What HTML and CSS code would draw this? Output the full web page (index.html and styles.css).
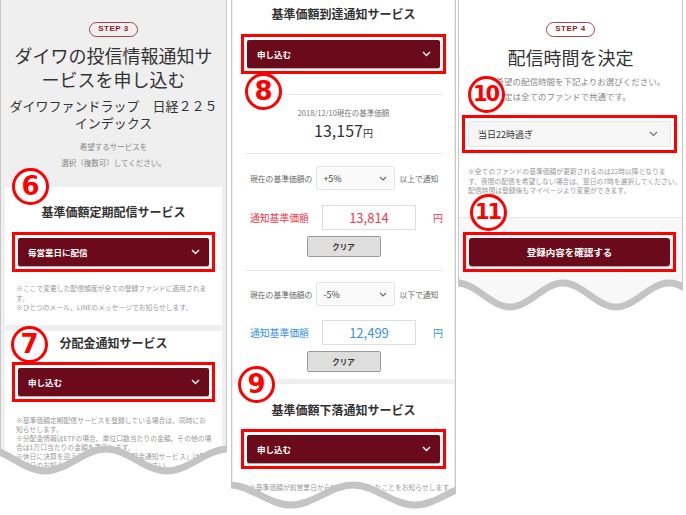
FILE: index.html
```html
<!DOCTYPE html>
<html lang="ja">
<head>
  <meta charset="UTF-8" />
  <meta name="viewport" content="width=device-width, initial-scale=1.0"/>
  <title>投信情報通知サービス 申込手順</title>
  <link rel="stylesheet" href="styles.css">
</head>
<body>

<div class="screens">

  <!-- STEP 3 : service select -->
  <section class="screen screen-step3">
    <div class="intro">
      <span class="step">STEP 3</span>
      <h1 class="page-title">ダイワの投信情報通知サ<br>ービスを申し込む</h1>
      <p class="fund-name">ダイワファンドラップ　日経２２５<br>インデックス</p>
      <p class="hint">希望するサービスを<br>選択（複数可）してください。</p>
    </div>

    <div class="card card-first">
      <h2 class="card-title">基準価額定期配信サービス</h2>
      <div class="highlight">
        <div class="dropdown">
          <span>毎営業日に配信</span>
          <svg class="chev" width="9" height="6" viewBox="0 0 9 6"><path d="M1 1l3.5 3.5L8 1" fill="none" stroke="#fff" stroke-width="1.4"/></svg>
        </div>
      </div>
      <p class="note">※ここで変更した配信頻度が全ての登録ファンドに適用されま<br>す。<br>※ひとつのメール、LINEのメッセージでお知らせします。</p>
    </div>

    <div class="card card-dist">
      <h2 class="card-title">分配金通知サービス</h2>
      <div class="highlight">
        <div class="dropdown">
          <span>申し込む</span>
          <svg class="chev" width="9" height="6" viewBox="0 0 9 6"><path d="M1 1l3.5 3.5L8 1" fill="none" stroke="#fff" stroke-width="1.4"/></svg>
        </div>
      </div>
      <p class="note note-tight">※基準価額定期配信サービスを登録している場合は、同時にお<br>知らせします。<br>※分配金情報はETFの場合、単位口数当たりの金額、その他の場<br>合は1万口当たりの金額を表示します。<br>※休日に決算を迎えるファンドの「分配金通知サービス」は翌<br>営業日のお知らせとなりますのでご了承ください。</p>
    </div>

    <span class="marker m6">6</span>
    <span class="marker m7">7</span>

    <svg class="wave" width="227" height="38" viewBox="0 0 227 38">
      <path d="M-15,9 C6.85,9 23.15,31 45,31 C67.2,31 83.8,9 106,9 C128.2,9 144.8,31 167,31 C189.2,31 205.8,9 228,9 L228,40 L-15,40 Z" fill="#fff"/>
      <path d="M-15,9 C6.85,9 23.15,31 45,31 C67.2,31 83.8,9 106,9 C128.2,9 144.8,31 167,31 C189.2,31 205.8,9 228,9" fill="none" stroke="#c4c4c4" stroke-width="7"/>
    </svg>
  </section>

  <!-- arrival / drop notice -->
  <section class="screen screen-arrival">
    <div class="card card-arrival">
      <h2 class="card-title">基準価額到達通知サービス</h2>
      <div class="highlight">
        <div class="dropdown">
          <span>申し込む</span>
          <svg class="chev" width="9" height="6" viewBox="0 0 9 6"><path d="M1 1l3.5 3.5L8 1" fill="none" stroke="#fff" stroke-width="1.4"/></svg>
        </div>
      </div>
      <div class="divider"></div>
      <div class="base-price">
        <p class="base-date">2018/12/10現在の基準価額</p>
        <p class="base-value">13,157<small>円</small></p>
      </div>
      <div class="divider divider-flush"></div>

      <div class="rate-row">
        <span>現在の基準価額の</span>
        <div class="mini-select">
          <span>+5%</span>
          <svg width="8" height="5" viewBox="0 0 8 5"><path d="M1 1l3 3 3-3" fill="none" stroke="#666" stroke-width="1.1"/></svg>
        </div>
        <span>以上で通知</span>
      </div>
      <div class="target-row up">
        <span class="target-label">通知基準価額</span>
        <div class="target-input">13,814</div>
        <span class="yen">円</span>
      </div>
      <button class="clear-btn">クリア</button>

      <div class="divider divider-after-btn"></div>

      <div class="rate-row">
        <span>現在の基準価額の</span>
        <div class="mini-select">
          <span>-5%</span>
          <svg width="8" height="5" viewBox="0 0 8 5"><path d="M1 1l3 3 3-3" fill="none" stroke="#666" stroke-width="1.1"/></svg>
        </div>
        <span>以下で通知</span>
      </div>
      <div class="target-row down">
        <span class="target-label">通知基準価額</span>
        <div class="target-input">12,499</div>
        <span class="yen">円</span>
      </div>
      <button class="clear-btn">クリア</button>
    </div>

    <div class="card card-drop">
      <h2 class="card-title">基準価額下落通知サービス</h2>
      <div class="highlight">
        <div class="dropdown">
          <span>申し込む</span>
          <svg class="chev" width="9" height="6" viewBox="0 0 9 6"><path d="M1 1l3.5 3.5L8 1" fill="none" stroke="#fff" stroke-width="1.4"/></svg>
        </div>
      </div>
      <p class="note note-wide">※基準価額が前営業日から5%以上急落したことをお知らせします。</p>
    </div>

    <span class="marker m8">8</span>
    <span class="marker m9">9</span>

    <svg class="wave" width="225" height="38" viewBox="0 0 225 38">
      <path d="M-2,13 C20.6,13 37.4,33 60,33 C82.6,33 99.4,13 122,13 C144.6,13 161.4,33 184,33 C206.6,33 223.4,13 246,13 L246,40 L-2,40 Z" fill="#fff"/>
      <path d="M-2,13 C20.6,13 37.4,33 60,33 C82.6,33 99.4,13 122,13 C144.6,13 161.4,33 184,33 C206.6,33 223.4,13 246,13" fill="none" stroke="#c4c4c4" stroke-width="7"/>
    </svg>
  </section>

  <!-- STEP 4 : delivery time -->
  <section class="screen screen-step4">
    <div class="intro">
      <span class="step">STEP 4</span>
      <h1 class="page-title page-title-step4">配信時間を決定</h1>
    </div>
    <p class="lead">ご希望の配信時間を下記よりお選びください。<br>※設定は全てのファンドで共通です。</p>

    <div class="highlight highlight-step4">
      <div class="select-light">
        <span>当日22時過ぎ</span>
        <svg width="9" height="6" viewBox="0 0 9 6"><path d="M1 1l3.5 3.5L8 1" fill="none" stroke="#777" stroke-width="1.2"/></svg>
      </div>
    </div>
    <p class="note note-step4">※全てのファンドの基準価額が更新されるのは22時以降となりま<br>す。夜間の配信を希望しない場合は、翌日の7時を選択してください。<br>配信時間は登録後もマイページより変更ができます。</p>

    <div class="confirm">
      <div class="highlight highlight-step4">
        <button class="confirm-btn">登録内容を確認する</button>
      </div>
    </div>

    <span class="marker marker-wide m10">10</span>
    <span class="marker marker-wide m11">11</span>

    <svg class="wave" width="225" height="40" viewBox="0 0 225 40">
      <path d="M-1,10 C18.3,10 32.7,34 52,34 C71.3,34 85.7,10 105,10 C124.3,10 138.7,34 158,34 C177.3,34 191.7,10 211,10 C230.3,10 244.7,34 264,34 L264,42 L-1,42 Z" fill="#fff"/>
      <path d="M-1,10 C18.3,10 32.7,34 52,34 C71.3,34 85.7,10 105,10 C124.3,10 138.7,34 158,34 C177.3,34 191.7,10 211,10 C230.3,10 244.7,34 264,34" fill="none" stroke="#c4c4c4" stroke-width="7"/>
    </svg>
  </section>

</div>

</body>
</html>
```

FILE: styles.css
```css
body {
  margin: 0;
  background: #fff;
  font-family: "Noto Sans CJK JP", "Noto Sans", sans-serif;
  color: #333;
}
p, h1, h2 {
  margin: 0;
}
.screens {
  display: flex;
  align-items: flex-start;
}
.screen {
  position: relative;
  overflow: hidden;
  box-sizing: border-box;
  box-shadow: inset 1px 0 #c8c8c8, inset -1px 0 #c8c8c8;
}
.screen-step3 {
  width: 227px;
  height: 478px;
  background: #efefef;
}
.screen-arrival {
  width: 225px;
  height: 510px;
  margin-left: 4px;
  background: #efefef;
}
.screen-step4 {
  width: 225px;
  height: 313px;
  margin-left: 2px;
  background: #fff;
}

/* heading block */
.intro {
  text-align: center;
  padding-top: 22px;
}
.step {
  display: block;
  width: max-content;
  box-sizing: border-box;
  height: 15px;
  margin: 0 auto;
  padding: 0 8px;
  border: 1.5px solid #a24452;
  border-radius: 8px;
  font: 700 8px/12px "Liberation Sans", sans-serif;
  letter-spacing: 0.5px;
  color: #8a1c2c;
}
.page-title {
  margin-top: 6px;
  font-size: 18px;
  line-height: 24px;
  font-weight: 400;
  color: #333;
}
.page-title-step4 {
  margin-top: 8px;
}
.fund-name {
  margin-top: 6px;
  font-size: 13px;
  line-height: 17px;
}
.hint {
  margin-top: 8px;
  font-size: 7.5px;
  line-height: 16px;
  color: #888;
}
.lead {
  margin-top: 5px;
  padding-left: 29px;
  font-size: 8.5px;
  line-height: 15px;
  color: #888;
}

/* cards */
.card {
  background: #fff;
  margin: 0 5px;
}
.card-title {
  font-size: 12px;
  line-height: 14px;
  font-weight: 700;
  text-align: center;
  color: #333;
}
.card-first {
  margin-top: 16px;
  padding: 18px 0 12px;
}
.card-dist {
  margin-top: 6px;
  padding: 5px 0 20px;
}
.screen-arrival .card {
  margin: 0 2px;
}
.card-arrival {
  padding: 7px 0 7px;
}
.card-drop {
  margin-top: 5px !important;
  padding: 19px 0 20px;
}

/* red highlight frame */
.highlight {
  border: 3px solid #f00;
  padding: 3px;
  margin: 13px 7px 0;
}
.card-dist .highlight,
.card-drop .highlight {
  margin-top: 12px;
}
.card-arrival .highlight,
.card-drop .highlight {
  margin-left: 8px;
  margin-right: 8px;
}
.card-arrival .highlight {
  margin-bottom: 20px;
}
.highlight-step4 {
  margin: 11px 6px 0 4px;
}
.confirm .highlight-step4 {
  margin-top: 0;
}

.dropdown {
  display: flex;
  align-items: center;
  justify-content: space-between;
  height: 28px;
  padding: 0 9px 0 10px;
  background: #6b0a1a;
  border-radius: 2px;
  box-shadow: 0 1px 1px rgba(0, 0, 0, 0.35);
  color: #fff;
  font-size: 8.5px;
  font-weight: 700;
}
.chev {
  display: block;
}

.note {
  margin: 12px 11px 0;
  font-size: 6.8px;
  line-height: 9.5px;
  color: #999;
  white-space: nowrap;
}
.note-tight {
  margin-top: 14px;
  line-height: 9px;
}
.note-wide {
  margin: 13px 16px 0;
  line-height: 10px;
}
.note-step4 {
  margin: 14px 10px 0;
}

/* arrival card */
.divider {
  height: 1px;
  background: #e8e8e8;
  margin: 0 12px;
}
.divider-after-btn {
  margin-top: 13px;
}
.base-price {
  text-align: center;
  padding: 12px 0 10px;
}
.base-date {
  font-size: 7.5px;
  line-height: 11px;
  color: #777;
}
.base-value {
  margin-top: 2px;
  font-size: 16px;
  line-height: 20px;
  color: #333;
}
.base-value small {
  font-size: 10px;
}
.rate-row {
  display: flex;
  align-items: center;
  margin-top: 12px;
  padding: 0 10px 0 17px;
  font-size: 7.8px;
  color: #666;
}
.divider-after-btn + .rate-row {
  margin-top: 11px;
}
.mini-select {
  display: flex;
  align-items: center;
  justify-content: space-between;
  box-sizing: border-box;
  width: 79px;
  height: 24px;
  margin: 0 4px;
  padding: 0 7px 0 6px;
  background: #fafafa;
  border: 1px solid #e6e6e6;
  border-radius: 2px;
  font-size: 9px;
  color: #444;
}
.target-row {
  display: flex;
  align-items: center;
  margin-top: 15px;
  padding-left: 17px;
}
.target-row.down {
  margin-top: 14px;
}
.target-label {
  width: 72px;
  font-size: 9.8px;
}
.target-input {
  box-sizing: border-box;
  width: 94px;
  height: 25px;
  border: 1px solid #ddd;
  text-align: center;
  font-size: 13px;
  line-height: 23px;
}
.yen {
  margin-left: 17px;
  font-size: 10px;
}
.up {
  color: #ee3a4a;
}
.down {
  color: #3592e6;
}
.clear-btn {
  display: block;
  box-sizing: border-box;
  width: 74px;
  height: 21px;
  margin: 6px auto 0;
  padding: 0;
  background: #dedede;
  border: 1px solid #9a9a9a;
  border-radius: 2px;
  font: 700 7.5px "Noto Sans CJK JP", sans-serif;
  color: #333;
}

/* step 4 */
.select-light {
  display: flex;
  align-items: center;
  justify-content: space-between;
  box-sizing: border-box;
  height: 26px;
  padding: 0 12px 0 9px;
  background: #f6f6f6;
  border: 1px solid #e6e6e6;
  border-radius: 2px;
  font-size: 9px;
  color: #333;
}
.confirm {
  margin: 21px 1px 0;
  padding: 14px 0 60px;
  border-top: 1px solid #e6e6e6;
  background: #f8f8f8;
}
.confirm-btn {
  display: block;
  width: 100%;
  height: 28px;
  padding: 0;
  background: #6b0a1a;
  border: 0;
  border-radius: 3px;
  box-shadow: 0 1px 1px rgba(0, 0, 0, 0.35);
  color: #fff;
  font: 700 9.5px "Noto Sans CJK JP", sans-serif;
}

/* numbered callouts over the screens */
.marker {
  position: absolute;
  box-sizing: border-box;
  width: 37px;
  height: 37px;
  border: 3px solid #f00;
  border-radius: 50%;
  background: #fff;
  color: #f00;
  font: 700 26px/31px "DejaVu Sans", sans-serif;
  text-align: center;
}
.marker-wide {
  font-size: 21px;
  letter-spacing: -2px;
  text-indent: -2px;
}
.m6 { left: 12px; top: 168px; }
.m7 { left: 11px; top: 326px; }
.m8 { left: 14px; top: 73px; }
.m9 { left: 7px; top: 366px; }
.m10 { left: 10px; top: 76px; }
.m11 { left: 12px; top: 194px; }

.wave {
  position: absolute;
  left: 0;
  bottom: 0;
  display: block;
}
```
